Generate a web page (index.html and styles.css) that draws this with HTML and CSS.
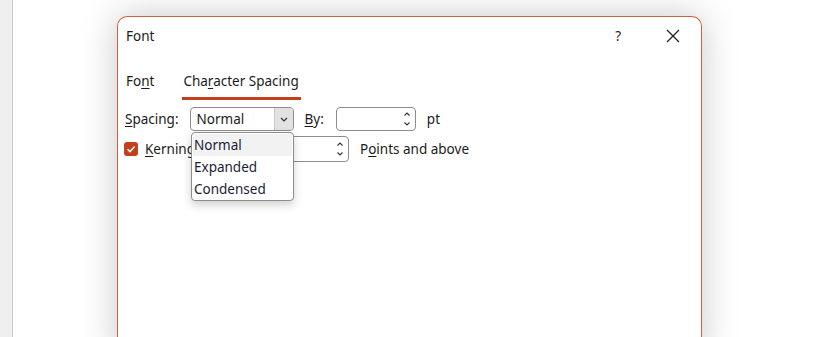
FILE: index.html
```html
<!DOCTYPE html>
<html>
<head>
<meta charset="utf-8">
<link rel="stylesheet" href="styles.css">
</head>
<body>
<div class="strip"></div>
<div class="desk">
  <div class="dialog">
    <div class="titlebar">
      <span class="title">Font</span>
      <span class="help">?</span>
      <svg class="close" width="14" height="14" viewBox="0 0 14 14"><path d="M1 1 L13 13 M13 1 L1 13" stroke="#222" stroke-width="1.3" fill="none"/></svg>
    </div>
    <div class="tabs">
      <span class="tab">Fo<u>n</u>t</span>
      <span class="tab active">Cha<u>r</u>acter Spacing</span>
    </div>
    <div class="body">
      <div class="row row1">
        <span class="label"><u>S</u>pacing:</span>
        <div class="combo">
          <span class="combo-text">Normal</span>
          <span class="combo-btn"><svg width="8" height="5" viewBox="0 0 8 5"><path d="M1 1 L4 4 L7 1" stroke="#333" stroke-width="1.2" fill="none"/></svg></span>
        </div>
        <span class="label by"><u>B</u>y:</span>
        <div class="spin spin-by">
          <span class="arrows"><svg width="8" height="16" viewBox="0 0 8 16"><path d="M1.5 4.5 L4 2 L6.5 4.5 M1.5 11.5 L4 14 L6.5 11.5" stroke="#333" stroke-width="1.1" fill="none"/></svg></span>
        </div>
        <span class="label pt">pt</span>
      </div>
      <div class="row row2">
        <span class="check"><svg width="14" height="14" viewBox="0 0 14 14"><path d="M3.5 7.2 L6 9.6 L10.6 4.6" stroke="#fff" stroke-width="1.5" fill="none"/></svg></span>
        <span class="kern"><span class="label"><u>K</u>erning</span></span>
        <div class="spin spin-kern">
          <span class="arrows"><svg width="8" height="16" viewBox="0 0 8 16"><path d="M1.5 4.5 L4 2 L6.5 4.5 M1.5 11.5 L4 14 L6.5 11.5" stroke="#333" stroke-width="1.1" fill="none"/></svg></span>
        </div>
        <span class="label pts">P<u>o</u>ints and above</span>
      </div>
      <div class="dropdown">
        <div class="item sel">Normal</div>
        <div class="item">Expanded</div>
        <div class="item">Condensed</div>
      </div>
    </div>
  </div>
</div>
</body>
</html>
```
FILE: styles.css
```css
html, body {
  margin: 0;
  padding: 0;
  height: 337px;
  overflow: hidden;
  background: #fff;
}
body {
  display: flex;
  font-family: "Noto Sans", "Open Sans", sans-serif;
  font-size: 13.5px;
  color: #1b1b1b;
}
.strip {
  width: 12px;
  height: 337px;
  background: #efefef;
  border-right: 1px solid #cbcbcb;
  flex: none;
}
.desk {
  flex: 1;
  height: 321px;
  overflow: hidden;
  padding-left: 104px;
  padding-top: 16px;
}
.dialog {
  width: 583px;
  height: 340px;
  border: 1px solid #d65f42;
  border-bottom: none;
  border-radius: 10px 10px 0 0;
  background: #fff;
  box-shadow: 0 0 36px rgba(0, 0, 0, 0.22);
  display: flex;
  flex-direction: column;
}
.titlebar {
  height: 38px;
  display: flex;
  align-items: center;
  padding-left: 8px;
}
.title { flex: 1; }
.help {
  margin-right: 45px;
}
.close {
  margin-right: 21px;
}
.tabs {
  display: flex;
  padding-left: 8px;
  margin-top: 11px;
  height: 34px;
}
.tab {
  padding-top: 6px;
  margin-right: 29px;
}
.tab.active {
  border-bottom: 3px solid #c43e1c;
  padding-left: 1px;
  padding-right: 2px;
  margin-left: -1px;
  height: 25px;
}
u { text-decoration-thickness: 1px; text-underline-offset: 2px; }
.body {
  position: relative;
  padding-top: 7px;
}
.row {
  display: flex;
  align-items: center;
}
.row1 {
  height: 24px;
  padding-left: 7px;
}
.combo {
  margin-left: 11px;
  width: 102px;
  height: 22px;
  border: 1px solid #8d8d8d;
  border-radius: 4px;
  display: flex;
  align-items: center;
}
.combo-text {
  flex: 1;
  padding-left: 6px;
}
.combo-btn {
  width: 18px;
  height: 22px;
  background: #e2e2e2;
  border-radius: 0 3px 3px 0;
  border-left: 1px solid #c8c8c8;
  display: flex;
  align-items: center;
  justify-content: center;
}
.by { margin-left: 11px; }
.spin {
  height: 22px;
  border: 1px solid #8d8d8d;
  border-radius: 4px;
  display: flex;
  align-items: center;
  justify-content: flex-end;
}
.spin-by {
  margin-left: 12px;
  width: 78px;
}
.arrows {
  width: 16px;
  display: flex;
  justify-content: center;
}
.pt { margin-left: 11px; }
.row2 {
  margin-top: 5px;
  height: 26px;
  padding-left: 6px;
}
.check {
  width: 14px;
  height: 14px;
  background: #c43e1c;
  border-radius: 3px;
  display: flex;
}
.kern {
  margin-left: 7px;
  width: 116px;
  white-space: nowrap;
}
.spin-kern {
  margin-left: 7px;
  width: 79px;
  height: 24px;
}
.pts { margin-left: 11px; }
.dropdown {
  position: absolute;
  left: 73px;
  top: 32px;
  width: 101px;
  height: 66px;
  border: 1px solid #8d8d8d;
  border-radius: 4px;
  background: #fff;
  box-shadow: 0 4px 10px rgba(0, 0, 0, 0.18);
  padding-top: 1px;
}
.item {
  height: 22px;
  line-height: 22px;
  padding-left: 2px;
  color: #1c1c3a;
}
.item.sel {
  background: #f2f2f2;
  margin: 0 1px;
  padding-left: 1px;
}
```
